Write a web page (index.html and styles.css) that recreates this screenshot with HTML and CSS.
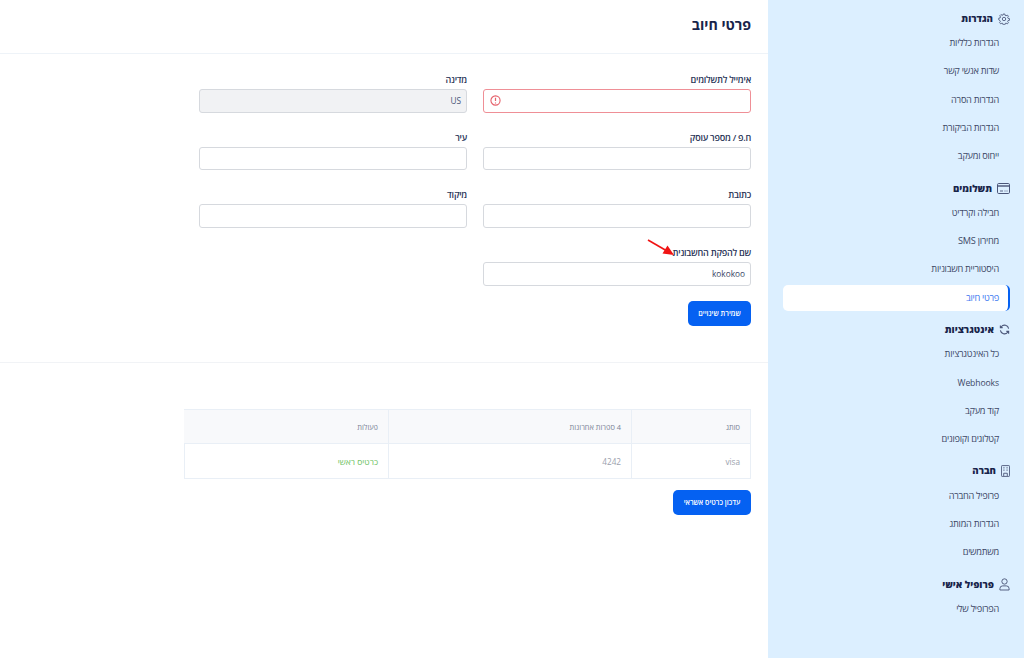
FILE: index.html
```html
<!DOCTYPE html>
<html lang="he">
<head>
<meta charset="utf-8">
<title>פרטי חיוב</title>
<link rel="stylesheet" href="styles.css">
</head>
<body>
<div class="app">
  <main class="main" dir="rtl">
    <header class="page-head"><h1>פרטי חיוב</h1></header>
    <section class="form-section">
      <div class="form-grid">
        <div class="field">
          <label>אימייל לתשלומים</label>
          <div class="input error">
            <svg class="err-icon" viewBox="0 0 12 12" width="11" height="11"><circle cx="6" cy="6" r="5" fill="none" stroke="#e5606a" stroke-width="1.2"/><path d="M6 3v3.6M6 8.2v1" stroke="#e5606a" stroke-width="1.3" fill="none"/></svg>
          </div>
        </div>
        <div class="field">
          <label>מדינה</label>
          <div class="input disabled">US</div>
        </div>
        <div class="field">
          <label>ח.פ / מספר עוסק</label>
          <div class="input"></div>
        </div>
        <div class="field">
          <label>עיר</label>
          <div class="input"></div>
        </div>
        <div class="field">
          <label>כתובת</label>
          <div class="input"></div>
        </div>
        <div class="field">
          <label>מיקוד</label>
          <div class="input"></div>
        </div>
        <div class="field">
          <label class="arrow-label">שם להפקת החשבונית
            <svg class="arrow" viewBox="0 0 28 18" width="28" height="18"><path d="M1 1 L20 12" stroke="#f01414" stroke-width="1.6" fill="none"/><path d="M27 16 L15.5 14.5 L20.5 6.5 Z" fill="#f01414"/></svg>
          </label>
          <div class="input">kokokoo</div>
        </div>
      </div>
      <button class="btn save">שמירת שינויים</button>
    </section>
    <section class="card-section">
      <div class="table">
        <div class="cell head c1">סותג</div>
        <div class="cell head c2">4 ספרות אחרונות</div>
        <div class="cell head c3">פעולות</div>
        <div class="cell body c1">visa</div>
        <div class="cell body c2">4242</div>
        <div class="cell body c3 green">כרטיס ראשי</div>
      </div>
      <button class="btn update">עדכון כרטיס אשראי</button>
    </section>
  </main>
  <aside class="side" dir="rtl">
    <div class="group">
      <div class="group-head">
        <svg viewBox="0 0 24 24" width="12" height="12" fill="none" stroke="#4a5578" stroke-width="1.7"><path d="M10.3 2h3.4l.5 2.8 1.9.8 2.4-1.6 2.4 2.4-1.6 2.4.8 1.9 2.8.5v3.4l-2.8.5-.8 1.9 1.6 2.4-2.4 2.4-2.4-1.6-1.9.8-.5 2.8h-3.4l-.5-2.8-1.9-.8-2.4 1.6-2.4-2.4 1.6-2.4-.8-1.9L1.5 13.7v-3.4l2.8-.5.8-1.9-1.6-2.4 2.4-2.4 2.4 1.6 1.9-.8z"/><circle cx="12" cy="12" r="3.4"/></svg>
        <span>הגדרות</span>
      </div>
      <a class="item">הגדרות כלליות</a>
      <a class="item">שדות אנשי קשר</a>
      <a class="item">הגדרות הסרה</a>
      <a class="item">הגדרות הביקורת</a>
      <a class="item">ייחוס ומעקב</a>
    </div>
    <div class="group">
      <div class="group-head">
        <svg viewBox="0 0 13 11" width="13" height="11" fill="none" stroke="#4a5578"><rect x=".5" y=".5" width="12" height="10" rx="1.2"/><path d="M.5 3h12" stroke-width="1.4"/><path d="M3 8h3M7.5 8h1M9.5 8h1" stroke-width=".9"/></svg>
        <span>תשלומים</span>
      </div>
      <a class="item">חבילה וקרדיט</a>
      <a class="item">מחירון SMS</a>
      <a class="item">היסטוריית חשבוניות</a>
      <a class="item active">פרטי חיוב</a>
    </div>
    <div class="group">
      <div class="group-head">
        <svg viewBox="0 0 24 24" width="11" height="11" fill="none" stroke="#4a5578" stroke-width="2.4"><path d="M21 10a9 9 0 0 0-16-4L3 8M3 14a9 9 0 0 0 16 4l2-2"/><path d="M3 3v5h5M21 21v-5h-5"/></svg>
        <span>אינטגרציות</span>
      </div>
      <a class="item">כל האינטגרציות</a>
      <a class="item latin">Webhooks</a>
      <a class="item">קוד מעקב</a>
      <a class="item">קטלוגים וקופונים</a>
    </div>
    <div class="group">
      <div class="group-head">
        <svg viewBox="0 0 10 13" width="9" height="12" fill="none" stroke="#4a5578"><rect x=".5" y=".5" width="9" height="12" rx=".8"/><path d="M2.5 3h1.5M6 3h1.5M2.5 5.5h1.5M6 5.5h1.5M3 12V9h4v3" stroke-width="1"/></svg>
        <span>חברה</span>
      </div>
      <a class="item">פרופיל החברה</a>
      <a class="item">הגדרות המותג</a>
      <a class="item">משתמשים</a>
    </div>
    <div class="group">
      <div class="group-head">
        <svg viewBox="0 0 12 14" width="11" height="13" fill="none" stroke="#4a5578" stroke-width="1"><circle cx="6" cy="3.7" r="2.9"/><path d="M1 13v-1.5a3 3 0 0 1 3-3h4a3 3 0 0 1 3 3V13z"/></svg>
        <span>פרופיל אישי</span>
      </div>
      <a class="item">הפרופיל שלי</a>
    </div>
  </aside>
</div>
</body>
</html>
```
FILE: styles.css
```css
* { box-sizing: border-box; }
html, body { margin: 0; height: 658px; overflow: hidden; background: #fff; }
body { font-family: "Open Sans", "Liberation Sans", sans-serif; color: #1e2a4a; }
.app { display: flex; height: 658px; }
.main { width: 768px; flex: none; background: #fff; }
.page-head { height: 54px; border-bottom: 1px solid #eef3f8; padding: 14px 17px 0 0; }
h1 { margin: 0; font-size: 14.2px; line-height: 22px; font-weight: 700; color: #18244a; }
.form-section { height: 309px; border-bottom: 1px solid #f1f3f6; padding: 18px 17px 0 0; display: flex; flex-direction: column; align-items: flex-start; }
.form-grid { display: grid; grid-template-columns: 268px 268px; column-gap: 16px; row-gap: 17.2px; margin-bottom: 15.5px; }
.field { display: flex; flex-direction: column; }
label { font-size: 9px; font-weight: 600; letter-spacing: -.24px; line-height: 16px; height: 14px; margin-bottom: 3px; color: #2a3557; position: relative; }
.arrow { position: absolute; right: 76px; top: -6px; }
.input { height: 23.5px; border: 1px solid #d6d9de; border-radius: 3px; background: #fff; font-size: 8.3px; line-height: 22.5px; padding-right: 5px; color: #3a4566; position: relative; }
.input.error { border-color: #ef8f96; }
.err-icon { position: absolute; left: 6px; top: 5px; }
.input.disabled { background: #f1f2f4; color: #4a5578; }
.btn { border: 0; border-radius: 5px; background: #0561f2; color: #fff; font-family: inherit; font-size: 7.1px; font-weight: 600; height: 24.5px; padding: 0; white-space: nowrap; }
.save { width: 63px; }
.card-section { padding: 46px 17px 0 0; display: flex; flex-direction: column; align-items: flex-start; }
.table { display: grid; grid-template-columns: 119px 243px 205px; grid-template-rows: 34px 35px; width: 567px; border-top: 1px solid #e9eff6; border-left: 1px solid #e9eff6; margin-bottom: 11px; }
.cell { border-right: 1px solid #e9eff6; border-bottom: 1px solid #e9eff6; font-size: 7.4px; padding: 0 10px; display: flex; align-items: center; color: #7b8396; }
.cell.head { background: #f8f9fb; }
.cell.body { font-size: 8.2px; color: #9ba1ae; }
.cell.green { color: #6dbf62; font-size: 8.5px; }
.update { width: 78px; }
.side { width: 256px; flex: none; background: #dcefff; padding: 11px 14px 0 15px; }
.group { margin-bottom: 11px; }
.group-head { display: flex; align-items: center; gap: 5px; height: 15px; margin-bottom: 4.2px; font-size: 9.7px; font-weight: 800; color: #18244a; }
.group-head svg { flex: none; }
.item { display: block; height: 26.3px; margin-bottom: 2px; padding-right: 11px; font-size: 9.2px; letter-spacing: -.27px; line-height: 26px; color: #3d4866; border-radius: 5px; }
.item.latin { font-size: 8.6px; letter-spacing: -.1px; }
.item.active { background: #fff; color: #3c78f0; border-right: 2px solid #0561f2; padding-right: 9px; }
```
